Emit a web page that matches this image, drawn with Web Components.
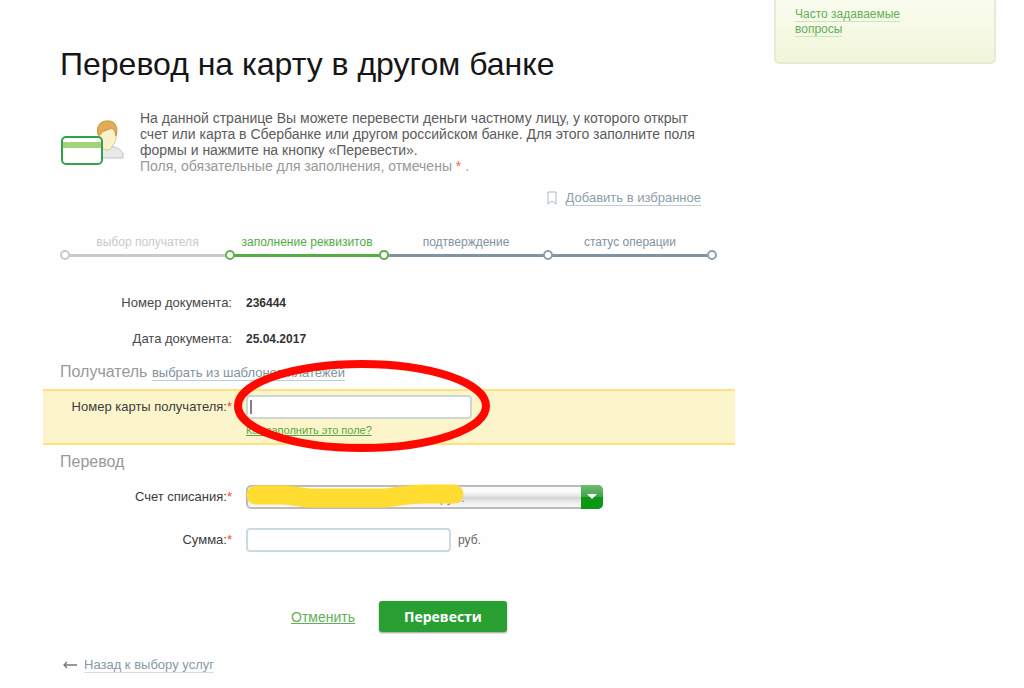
<!DOCTYPE html>
<html lang="ru">
<head>
<meta charset="utf-8">
<meta name="viewport" content="width=device-width, initial-scale=1">
<title>Перевод на карту в другом банке</title>
<style>
  body { margin: 0; background: #fefefe; color: #484848; font: 14px/16px "Liberation Sans", Arial, sans-serif; }
</style>
</head>
<body>
<transfer-page>
  <page-title>Перевод на карту в другом банке</page-title>
  <page-intro>
    На данной странице Вы можете перевести деньги частному лицу, у которого открыт<br>
    счет или карта в Сбербанке или другом российском банке. Для этого заполните поля<br>
    формы и нажмите на кнопку «Перевести».
  </page-intro>
  <favorite-link>Добавить в избранное</favorite-link>
  <step-bar>
    <step-item state="done">выбор получателя</step-item>
    <step-item state="active">заполнение реквизитов</step-item>
    <step-item>подтверждение</step-item>
    <step-item last>статус операции</step-item>
  </step-bar>
  <doc-facts>
    <fact-row label="Номер документа:">236444</fact-row>
    <fact-row label="Дата документа:">25.04.2017</fact-row>
  </doc-facts>
  <section-title>Получатель <dotted-link>выбрать из шаблонов платежей</dotted-link></section-title>
  <card-field></card-field>
  <section-title class="second">Перевод</section-title>
  <account-field></account-field>
  <amount-field></amount-field>
  <form-actions></form-actions>
  <back-link>Назад к выбору услуг</back-link>
  <help-panel slot="aside">Часто задаваемые вопросы</help-panel>
</transfer-page>

<script>
  const define = (name, html) => {
    const template = document.createElement('template');
    template.innerHTML = html;
    customElements.define(name, class extends HTMLElement {
      constructor() {
        super();
        this.attachShadow({ mode: 'open' }).append(template.content.cloneNode(true));
      }
      connectedCallback() {
        const target = this.shadowRoot.querySelector('[data-label]');
        if (target) target.textContent = this.getAttribute('label');
      }
    });
  };

  const fieldStyles = `
    *, :host { box-sizing: border-box; }
    :host { display: block; }
    .row { display: grid; grid-template-columns: 189px minmax(0, 1fr); column-gap: 14px; align-items: start; }
    label { text-align: right; font-size: 13px; line-height: 24px; color: #3c3c3c; }
    .req { color: #f43; }
    input { display: block; width: 100%; height: 24px; padding: 0 6px; border: 2px solid #ccd9e1;
      border-radius: 4px; background: #fff; font: 13px "Liberation Sans", Arial, sans-serif; outline: 0; }
  `;

  define('transfer-page', `
    <style>
      :host { display: grid; grid-template-columns: minmax(0, 1fr) 222px; column-gap: 39px; align-items: start;
        padding: 0 28px 0 43px; }
      main { min-width: 0; padding-bottom: 15px; }
    </style>
    <main><slot></slot></main>
    <slot name="aside"></slot>`);

  define('page-title', `
    <style>
      :host { display: block; padding: 44px 0 0 17px; }
      h1 { margin: 0; font-size: 32px; line-height: 40px; font-weight: 400; color: #161616; }
    </style>
    <h1><slot></slot></h1>`);

  define('page-intro', `
    <style>
      :host { display: grid; grid-template-columns: 64px minmax(0, 1fr); column-gap: 16px; padding: 26px 0 0 17px; }
      svg { display: block; margin-top: 9px; }
      p { margin: 0; color: #5c5c5c; }
      .note { color: #999; }
      .req { color: #f64; }
    </style>
    <svg width="64" height="48" viewBox="0 0 64 48" aria-hidden="true">
      <path d="M43 29 L50 27 C55 28 63 30 63 36 V39 H40 V29Z" fill="#e8e9e9" stroke="#bfc2c2"/>
      <path d="M39 13 Q40 7 46 6 Q54 5 56 12 C57 20 55 25 52 27 V29 Q47 33 42 29 V24 Q38 20 39 13Z" fill="#fdf1c9" stroke="#dcc691"/>
      <path d="M38 16 C36 7 40 2 47 2 C54 1 59 7 56 17 C55 12 54 10 51 9 C48 12 42 11 40 16Z" fill="#e0ad56" stroke="#c9963f"/>
      <rect x="2" y="18" width="40" height="27" rx="4" fill="#fffffb" stroke="#31a44b" stroke-width="2"/>
      <rect x="3" y="23" width="38" height="6" fill="#a0d47f"/>
    </svg>
    <div>
      <p><slot></slot></p>
      <p class="note">Поля, обязательные для заполнения, отмечены <span class="req">*</span> .</p>
    </div>`);

  define('dotted-link', `
    <style>
      a { color: #82939e; font-size: 13px; line-height: 16px; text-decoration: none; border-bottom: 1px solid #bccdd4; }
    </style>
    <a href="#"><slot></slot></a>`);

  define('favorite-link', `
    <style>
      :host { display: flex; justify-content: flex-end; align-items: center; gap: 9px; padding: 16px 34px 0 0; }
      a { color: #8c9fa9; font-size: 13px; line-height: 15px; text-decoration: none; border-bottom: 1px solid #bccdd4; }
    </style>
    <svg width="10" height="14" viewBox="0 0 10 14" aria-hidden="true">
      <path d="M1 1H9V13L5 10L1 13Z" fill="none" stroke="#a9bcc4"/>
    </svg>
    <a href="#"><slot></slot></a>`);

  define('step-bar', `
    <style>
      :host { display: grid; grid-template-columns: 165fr 154fr 164fr 164fr; padding: 28px 23px 0 22px; }
    </style>
    <slot></slot>`);

  define('step-item', `
    <style>
      :host { --tone: #8193a1; --dot: #8fa0ac; position: relative; display: block; min-width: 0; text-align: center;
        font-size: 12px; line-height: 16px; color: var(--tone); white-space: nowrap; }
      :host([state="done"]) { --tone: #cacaca; --dot: #cacaca; }
      :host([state="active"]) { --tone: #55ab46; --dot: #62b252; }
      .track { height: 10px; display: flex; align-items: center; }
      .line { flex: 1; height: 3px; background: var(--tone); }
      .dot { position: absolute; z-index: 1; bottom: 0; left: -5px; box-sizing: border-box; width: 10px; height: 10px;
        border: 2px solid var(--dot); border-radius: 50%; background: #fff; }
      .end { display: none; left: auto; right: -5px; }
      :host([last]) .end { display: block; }
      :host([state="active"]) .end { display: block; z-index: 2; }
    </style>
    <div><slot></slot></div>
    <div class="track"><span class="line"></span></div>
    <span class="dot"></span><span class="dot end"></span>`);

  define('doc-facts', `
    <style>:host { display: grid; row-gap: 16px; padding-top: 33px; }</style>
    <slot></slot>`);

  define('fact-row', `
    <style>
      :host { display: grid; grid-template-columns: 189px minmax(0, 1fr); column-gap: 14px; line-height: 20px; font-size: 13px; color: #484848; }
      .name { text-align: right; }
      b { font-size: 12px; color: #333; }
    </style>
    <span class="name" data-label></span><b><slot></slot></b>`);

  define('section-title', `
    <style>
      :host { display: block; padding: 13px 0 7px 17px; }
      :host(.second) { padding: 7px 0 13px 17px; }
      h2 { margin: 0; font-size: 16px; line-height: 20px; font-weight: 400; color: #999; }
    </style>
    <h2><slot></slot></h2>`);

  define('card-field', `
    <style>
      ${fieldStyles}
      :host { padding: 4px 0 6px; border: solid #ffe27c; border-width: 2px 0; background: #fcf5cc; }
      .control { position: relative; max-width: 226px; }
      input { border-color: #cfd6d6; }
      .caret { position: absolute; left: 4px; top: 5px; width: 2px; height: 14px; background: #8a7d84; }
      .hint { display: block; margin-top: 4px; font-size: 11px; line-height: 14px; color: #55a845; }
      .mark { position: absolute; left: -12px; top: -36px; pointer-events: none; }
    </style>
    <div class="row">
      <label for="card">Номер карты получателя:<span class="req">*</span></label>
      <div class="control">
        <input id="card" type="text" inputmode="numeric">
        <span class="caret"></span>
        <a class="hint" href="#">Как заполнить это поле?</a>
        <svg class="mark" width="256" height="96" viewBox="0 0 256 96" aria-hidden="true">
          <ellipse cx="128" cy="47" rx="124" ry="42" fill="none" stroke="#ff0800" stroke-width="8"/>
        </svg>
      </div>
    </div>`);

  define('account-field', `
    <style>
      ${fieldStyles}
      .control { position: relative; max-width: 357px; }
      select { display: block; appearance: none; width: 100%; height: 24px; margin: 0; padding: 0 24px 0 192px;
        border: 2px solid #bcbcbc; border-radius: 5px; color: #888; font: 13px "Liberation Sans", Arial, sans-serif;
        background: linear-gradient(#fbfbfb 0 20%, #ececec 40%, #d4d4d4 55%, #e8e8e8 70%, #fafafa); }
      .arrow { position: absolute; right: 0; top: 0; width: 22px; height: 24px; border-radius: 0 5px 5px 0;
        background: linear-gradient(#6fb973, #43a548 48%, #0c9816 52%, #0a9813); display: grid; place-items: center; pointer-events: none; }
      .paint { position: absolute; left: 0; top: -2px; pointer-events: none; }
    </style>
    <div class="row">
      <label for="account">Счет списания:<span class="req">*</span></label>
      <div class="control">
        <select id="account"><option>руб.</option></select>
        <span class="arrow"><svg width="10" height="6" viewBox="0 0 10 6" aria-hidden="true"><path d="M0 0H10L5 5Z" fill="#fff"/></svg></span>
        <svg class="paint" width="220" height="28" viewBox="0 0 220 28" aria-hidden="true">
          <path d="M10 12 H40 L62 15 H138 C155 13 165 11 178 11 H208" fill="none" stroke="#ffdc30" stroke-width="19" stroke-linecap="round" stroke-linejoin="round"/>
        </svg>
      </div>
    </div>`);

  define('amount-field', `
    <style>
      ${fieldStyles}
      :host { padding-top: 19px; }
      .control { display: flex; align-items: center; gap: 7px; }
      input { max-width: 205px; }
      .unit { font-size: 12px; color: #666; }
    </style>
    <div class="row">
      <label for="amount">Сумма:<span class="req">*</span></label>
      <div class="control"><input id="amount" type="text" inputmode="decimal"><span class="unit">руб.</span></div>
    </div>`);

  define('form-actions', `
    <style>
      :host { display: flex; align-items: center; gap: 24px; padding: 49px 0 0 248px; }
      a { color: #62b056; font-size: 14px; }
      button { width: 128px; height: 31px; padding: 0; border: 0; border-radius: 3px; background: #2a9f31; color: #fff;
        box-shadow: 0 1px 2px #0006; font: bold 14px "Open Sans", "Liberation Sans", sans-serif; }
    </style>
    <a href="#">Отменить</a>
    <button type="submit">Перевести</button>`);

  define('back-link', `
    <style>
      :host { display: flex; align-items: center; gap: 7px; padding: 25px 0 0 20px; }
      a { color: #879aa4; font-size: 13px; line-height: 15px; text-decoration: none; border-bottom: 1px solid #d5dfe3; }
    </style>
    <svg width="14" height="8" viewBox="0 0 14 8" aria-hidden="true">
      <path d="M1 4H14M4 1L1 4L4 7" fill="none" stroke="#777" stroke-width="1.3"/>
    </svg>
    <a href="#"><slot></slot></a>`);

  define('help-panel', `
    <style>
      :host { display: block; box-sizing: border-box; padding: 7px 80px 25px 19px; border: 2px solid #e8ead8; border-top: 0;
        border-radius: 0 0 5px 5px; background: linear-gradient(#fafcef, #f0f6d8); font-size: 12px; line-height: 15px; }
      a { color: #65ae59; text-decoration: none; border-bottom: 1px solid #cbe5bd; }
    </style>
    <a href="#"><slot></slot></a>`);
</script>
</body>
</html>
